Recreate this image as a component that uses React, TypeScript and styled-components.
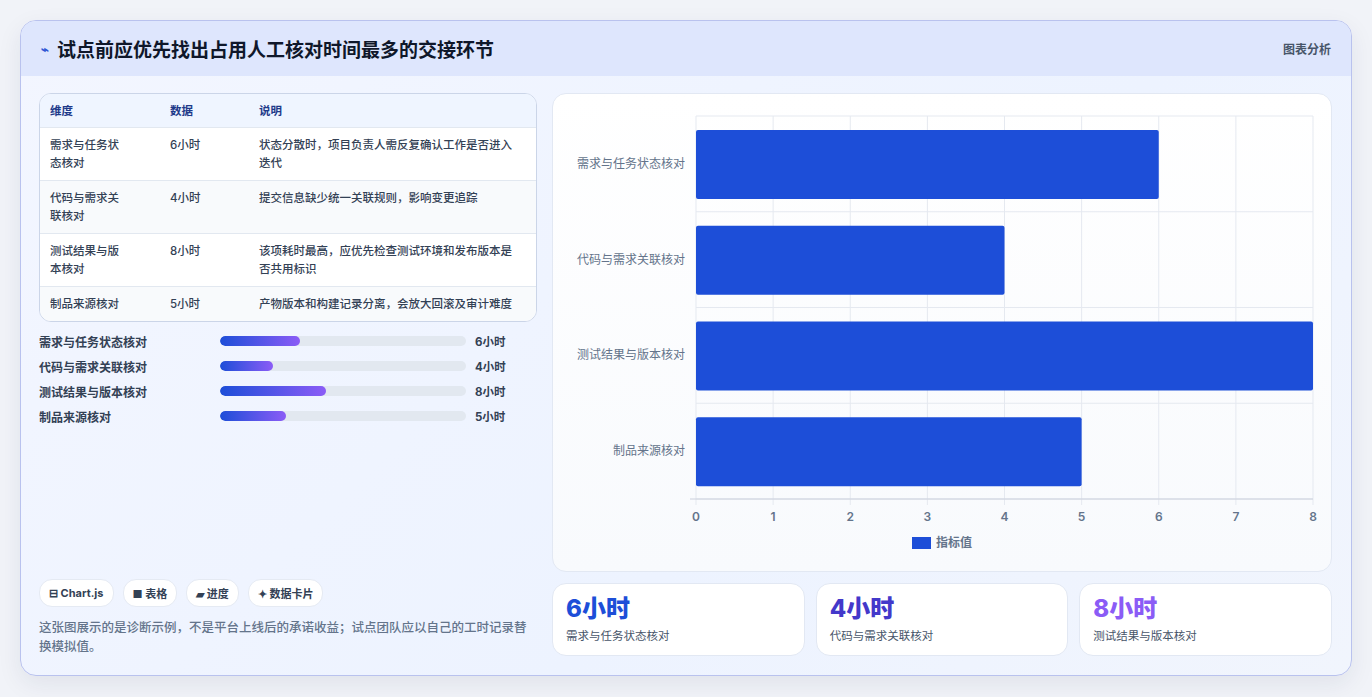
import React from "react";
import styled, { createGlobalStyle } from "styled-components";

const G = createGlobalStyle`
  body { margin:0; background:#f1f3f8; font-family: Inter, "Noto Sans CJK SC", sans-serif; }
`;
const Page = styled.div`padding:20px; width:1372px; height:697px; box-sizing:border-box;`;
const Card = styled.div`
  width:1332px; height:656px; box-sizing:border-box; border:1px solid #b9c2ee; border-radius:16px;
  background:linear-gradient(135deg,#f3f6ff 0%,#edf3ff 60%,#f1f5fd 100%); overflow:hidden;
  display:flex; flex-direction:column; box-shadow:0 8px 24px rgba(30,41,80,0.08);
`;
const Header = styled.div`
  height:55px; background:#dee6fd; display:flex; align-items:center; justify-content:space-between; padding:0 20px 0 20px;
`;
const Title = styled.h1`margin:0; font-size:19px; font-weight:700; color:#0f172a; display:flex; align-items:center; gap:8px;`;
const Bolt = styled.span`color:#2f55d4; font-size:13px;`;
const Tag = styled.span`font-size:12px; color:#475569; font-weight:600;`;
const Body = styled.div`flex:1; display:flex; gap:15px; padding:17px 19px 19px 18px;`;
const Left = styled.div`width:499px; display:flex; flex-direction:column;`;
const Right = styled.div`flex:1; display:flex; flex-direction:column; gap:11px;`;
const Table = styled.div`border:1px solid #cbd5e8; border-radius:12px; overflow:hidden; background:#fff; font-size:11.5px;`;
const Row = styled.div<{ $h: number; $bg: string; $head?: boolean }>`
  display:grid; grid-template-columns:120px 89px 1fr; height:${p => p.$h}px; padding:8px 10px 0 10px; box-sizing:border-box;
  background:${p => p.$bg}; border-top:${p => p.$head ? "none" : "1px solid #e2e8f0"};
  color:${p => p.$head ? "#1e3a8a" : "#334155"}; font-weight:${p => p.$head ? 700 : 500}; line-height:18px;
  ${p => p.$head ? "align-items:center; padding-top:0;" : ""}
`;
const Cell = styled.div`padding-right:8px;`;
const Bars = styled.div`display:flex; flex-direction:column; gap:7px; margin-top:10px;`;
const BarRow = styled.div`display:grid; grid-template-columns:181px 246px 1fr; align-items:center; height:18px; font-size:12px; font-weight:700; color:#334155;`;
const Track = styled.div`height:10px; border-radius:5px; background:#e2e8f0; overflow:hidden;`;
const Fill = styled.div`height:100%; border-radius:5px; background:linear-gradient(90deg,#1d4ed8,#8b5cf6);`;
const Val = styled.span`padding-left:9px; font-size:11.5px;`;
const Spacer = styled.div`flex:1;`;
const Chips = styled.div`display:flex; gap:9px;`;
const Chip = styled.span`height:26px; padding:0 9px; border-radius:13px; background:#fff; border:1px solid #e5eaf3; font-size:11px; font-weight:700; color:#334155; display:flex; align-items:center; gap:3px;`;
const Note = styled.p`margin:11px 0 0; font-size:12.5px; line-height:19px; color:#64748b; font-weight:500;`;
const ChartCard = styled.div`height:479px; background:linear-gradient(180deg,#fff,#f8fafd); border:1px solid #e2e8f3; border-radius:14px; box-sizing:border-box;`;
const Stats = styled.div`display:grid; grid-template-columns:repeat(3,1fr); gap:11px;`;
const Stat = styled.div`height:73px; background:#fff; border:1px solid #e2e8f3; border-radius:14px; padding:10px 13px; box-sizing:border-box;`;
const Big = styled.div<{ $c: string }>`font-size:24px; font-weight:800; color:${p => p.$c}; line-height:30px;`;
const Small = styled.div`font-size:11.5px; color:#475569; margin-top:3px;`;

const data = [
  ["需求与任务状态核对", 6, "状态分散时，项目负责人需反复确认工作是否进入迭代", 53],
  ["代码与需求关联核对", 4, "提交信息缺少统一关联规则，影响变更追踪", 53],
  ["测试结果与版本核对", 8, "该项耗时最高，应优先检查测试环境和发布版本是否共用标识", 53],
  ["制品来源核对", 5, "产物版本和构建记录分离，会放大回滚及审计难度", 35],
] as const;
const wrap = (s: string) => s.length > 6 ? <>{s.slice(0, 6)}<br />{s.slice(6)}</> : s;

function Chart() {
  const x0 = 143, x1 = 760, y0 = 22, y1 = 405, sx = (x1 - x0) / 8, band = (y1 - y0) / 4;
  return (
    <svg width="778" height="477" style={{ display: "block" }}>
      {Array.from({ length: 9 }, (_, i) => (
        <line key={i} x1={x0 + i * sx} x2={x0 + i * sx} y1={y0} y2={y1 + 6} stroke="#e5e9f0" />
      ))}
      {[0, 1, 2, 3, 4].map(i => <line key={i} x1={x0} x2={x1} y1={y0 + i * band} y2={y0 + i * band} stroke="#e5e9f0" />)}
      <line x1={x0 - 6} x2={x1} y1={y1} y2={y1} stroke="#cbd0dc" />
      {data.map((d, i) => (
        <g key={i}>
          <rect x={x0} y={y0 + i * band + 14} width={(d[1] as number) * sx} height={69} rx={2} fill="#1d4ed8" />
          <text x={x0 - 11} y={y0 + i * band + band / 2 + 4} textAnchor="end" fontSize="12" fill="#64748b" fontFamily="Inter, 'Noto Sans CJK SC'">{d[0]}</text>
        </g>
      ))}
      {Array.from({ length: 9 }, (_, i) => (
        <text key={i} x={x0 + i * sx} y={427} textAnchor="middle" fontSize="12" fontWeight="600" fill="#64748b" fontFamily="Inter">{i}</text>
      ))}
      <rect x={359} y={443} width={19} height={12} fill="#1d4ed8" />
      <text x={383} y={453} fontSize="12" fill="#64748b" fontWeight="600" fontFamily="Inter, 'Noto Sans CJK SC'">指标值</text>
    </svg>
  );
}

export default function App() {
  return (
    <Page>
      <G />
      <Card>
        <Header>
          <Title><Bolt>⌁</Bolt>试点前应优先找出占用人工核对时间最多的交接环节</Title>
          <Tag>图表分析</Tag>
        </Header>
        <Body>
          <Left>
            <Table>
              <Row $h={33} $bg="#eff5ff" $head><Cell>维度</Cell><Cell>数据</Cell><Cell>说明</Cell></Row>
              {data.map((d, i) => (
                <Row key={i} $h={d[3] as number} $bg={i % 2 ? "#f8fafc" : "#fff"}>
                  <Cell>{wrap(d[0] as string)}</Cell><Cell>{d[1]}小时</Cell><Cell>{d[2]}</Cell>
                </Row>
              ))}
            </Table>
            <Bars>
              {data.map((d, i) => (
                <BarRow key={i}>
                  <span>{d[0]}</span>
                  <Track><Fill style={{ width: `${(d[1] as number) * 5.4}%` }} /></Track>
                  <Val>{d[1]}小时</Val>
                </BarRow>
              ))}
            </Bars>
            <Spacer />
            <Chips>
              <Chip>⊟ Chart.js</Chip><Chip>■ 表格</Chip><Chip>▰ 进度</Chip><Chip>✦ 数据卡片</Chip>
            </Chips>
            <Note>这张图展示的是诊断示例，不是平台上线后的承诺收益；试点团队应以自己的工时记录替换模拟值。</Note>
          </Left>
          <Right>
            <ChartCard><Chart /></ChartCard>
            <Stats>
              <Stat><Big $c="#1d4ed8">6小时</Big><Small>需求与任务状态核对</Small></Stat>
              <Stat><Big $c="#4338ca">4小时</Big><Small>代码与需求关联核对</Small></Stat>
              <Stat><Big $c="#8b5cf6">8小时</Big><Small>测试结果与版本核对</Small></Stat>
            </Stats>
          </Right>
        </Body>
      </Card>
    </Page>
  );
}
